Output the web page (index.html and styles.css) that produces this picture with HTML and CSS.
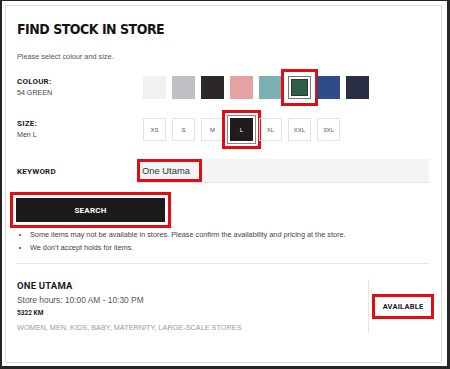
FILE: index.html
```html
<!DOCTYPE html>
<html lang="en">
<head>
<meta charset="utf-8">
<title>Find stock in store</title>
<link rel="stylesheet" href="styles.css">
</head>
<body>
<div class="frame">
  <div class="panel">
    <h1 class="title">FIND STOCK IN STORE</h1>
    <p class="hint">Please select colour and size.</p>

    <div class="row colour-row">
      <div class="label">
        <div class="label-title">COLOUR:</div>
        <div class="label-value">54 GREEN</div>
      </div>
      <ul class="options">
        <li class="swatch" style="background:#f1f1f1"></li>
        <li class="swatch" style="background:#c2c0c6"></li>
        <li class="swatch" style="background:#2c2728"></li>
        <li class="swatch" style="background:#e6a1a2"></li>
        <li class="swatch" style="background:#7bb2b1"></li>
        <li class="swatch selected" style="background:#2f5f49"></li>
        <li class="swatch" style="background:#2f4b8a"></li>
        <li class="swatch" style="background:#2a2f47"></li>
      </ul>
    </div>

    <div class="row size-row">
      <div class="label">
        <div class="label-title">SIZE:</div>
        <div class="label-value">Men L</div>
      </div>
      <ul class="options">
        <li class="size">XS</li>
        <li class="size">S</li>
        <li class="size">M</li>
        <li class="size selected">L</li>
        <li class="size">XL</li>
        <li class="size">XXL</li>
        <li class="size">3XL</li>
      </ul>
    </div>

    <div class="row keyword-row">
      <div class="label-title">KEYWORD</div>
      <div class="input"><span class="input-value">One Utama</span></div>
    </div>

    <button class="search">SEARCH</button>

    <ul class="notes">
      <li>Some items may not be available in stores. Please confirm the availability and pricing at the store.</li>
      <li>We don't accept holds for items.</li>
    </ul>

    <div class="store">
      <div class="store-info">
        <div class="store-name">ONE UTAMA</div>
        <div class="store-hours">Store hours: 10:00 AM - 10:30 PM</div>
        <div class="store-distance">5322 KM</div>
        <div class="store-cats">WOMEN, MEN, KIDS, BABY, MATERNITY, LARGE-SCALE STORES</div>
      </div>
      <div class="store-status"><span class="status">AVAILABLE</span></div>
    </div>
  </div>
</div>
</body>
</html>
```
FILE: styles.css
```css
* { box-sizing: border-box; }
html, body { margin: 0; padding: 0; background: #fff; }
body { width: 450px; height: 369px; overflow: hidden; font-family: "Liberation Sans", Arial, sans-serif; color: #444; }

.frame {
  width: 450px; height: 369px;
  border-style: solid; border-color: #252525;
  border-width: 1px 3px 3px 2px;
  padding: 4px 5px 3px 3px;
  display: flex;
}
.panel {
  flex: 1;
  border: 1px solid #dcdcdc;
  padding: 13px 12px 0 11px;
  display: flex; flex-direction: column;
}

.title, .label-title, .search, .store-name, .store-distance, .status {
  font-family: Roboto, "Liberation Sans", sans-serif;
  font-weight: bold;
  color: #1b1b1b;
}

.title {
  margin: 0;
  font-family: "DejaVu Sans Condensed", "DejaVu Sans", Roboto, sans-serif;
  font-size: 14px; line-height: 20px; letter-spacing: -0.5px;
  color: #151515;
}
.hint { margin: 13px 0 0; font-size: 7.3px; line-height: 10px; color: #555; }

.row { display: grid; grid-template-columns: 120px 1fr; align-items: start; }
.colour-row { margin-top: 14px; }
.size-row { margin-top: 19px; }
.keyword-row { margin-top: 18px; align-items: center; }

.label-title { font-size: 8px; line-height: 11px; letter-spacing: 0.2px; }
.label-value { font-size: 7.1px; line-height: 11px; margin-top: 1px; color: #444; }

.options { list-style: none; margin: 0; padding: 0 0 0 6px; display: flex; gap: 6px; }
.swatch { width: 23px; height: 23px; }
.swatch.selected {
  border: 1px solid #777;
  box-shadow: inset 0 0 0 2px #fff, inset 0 0 0 3px #333;
  outline: 3px solid #e10d12; outline-offset: 4px;
}
.size {
  width: 23px; height: 23px;
  border: 1px solid #e2e2e2;
  font-size: 6px; color: #555;
  display: flex; align-items: center; justify-content: center;
}
.size.selected {
  background: #231a1b; color: #fff; border: 1px solid #231a1b;
  box-shadow: 0 0 0 2px #fff, 0 0 0 3px #8a8a8a;
  outline: 3px solid #e10d12; outline-offset: 5px;
}

.input {
  height: 24px; background: #f4f4f4;
  border-bottom: 1px solid #e4e4e4;
  display: flex;
}
.input-value {
  width: 65px; height: 23px;
  border: 3px solid #e10d12;
  padding-left: 2px;
  font-size: 9.4px; color: #333;
  display: flex; align-items: center;
}

.search {
  margin: 15px 0 0 -1px;
  width: 149px; height: 24px;
  background: #1b1b1b; color: #fff;
  border: 0; padding: 0;
  font-size: 8px; letter-spacing: 0.2px;
  outline: 3px solid #e10d12; outline-offset: 3px;
  align-self: flex-start;
}

.notes {
  margin: 6px 0 9px; padding: 0 0 0 13px;
  font-size: 7.3px; line-height: 13px; color: #444;
}

.store {
  border-top: 1px solid #e6e6e6;
  padding-top: 15px;
  display: flex; align-items: stretch;
}
.store-info { flex: 1; }
.store-name { font-size: 9.5px; line-height: 13px; letter-spacing: 0.2px; }
.store-hours { margin-top: 2px; font-size: 8.4px; line-height: 13px; color: #555; }
.store-distance { margin-top: 1px; font-size: 6.5px; line-height: 11px; }
.store-cats { margin-top: 3px; font-size: 7.3px; line-height: 11px; color: #9a9a9a; }

.store-status {
  width: 61px; border-left: 1px solid #e6e6e6;
  padding-left: 3px;
  display: flex; align-items: center;
}
.status {
  flex: none;
  width: 62px; height: 25px;
  border: 3px solid #e10d12;
  font-size: 7.5px; letter-spacing: 0.2px;
  display: flex; align-items: center; justify-content: center;
}
```
